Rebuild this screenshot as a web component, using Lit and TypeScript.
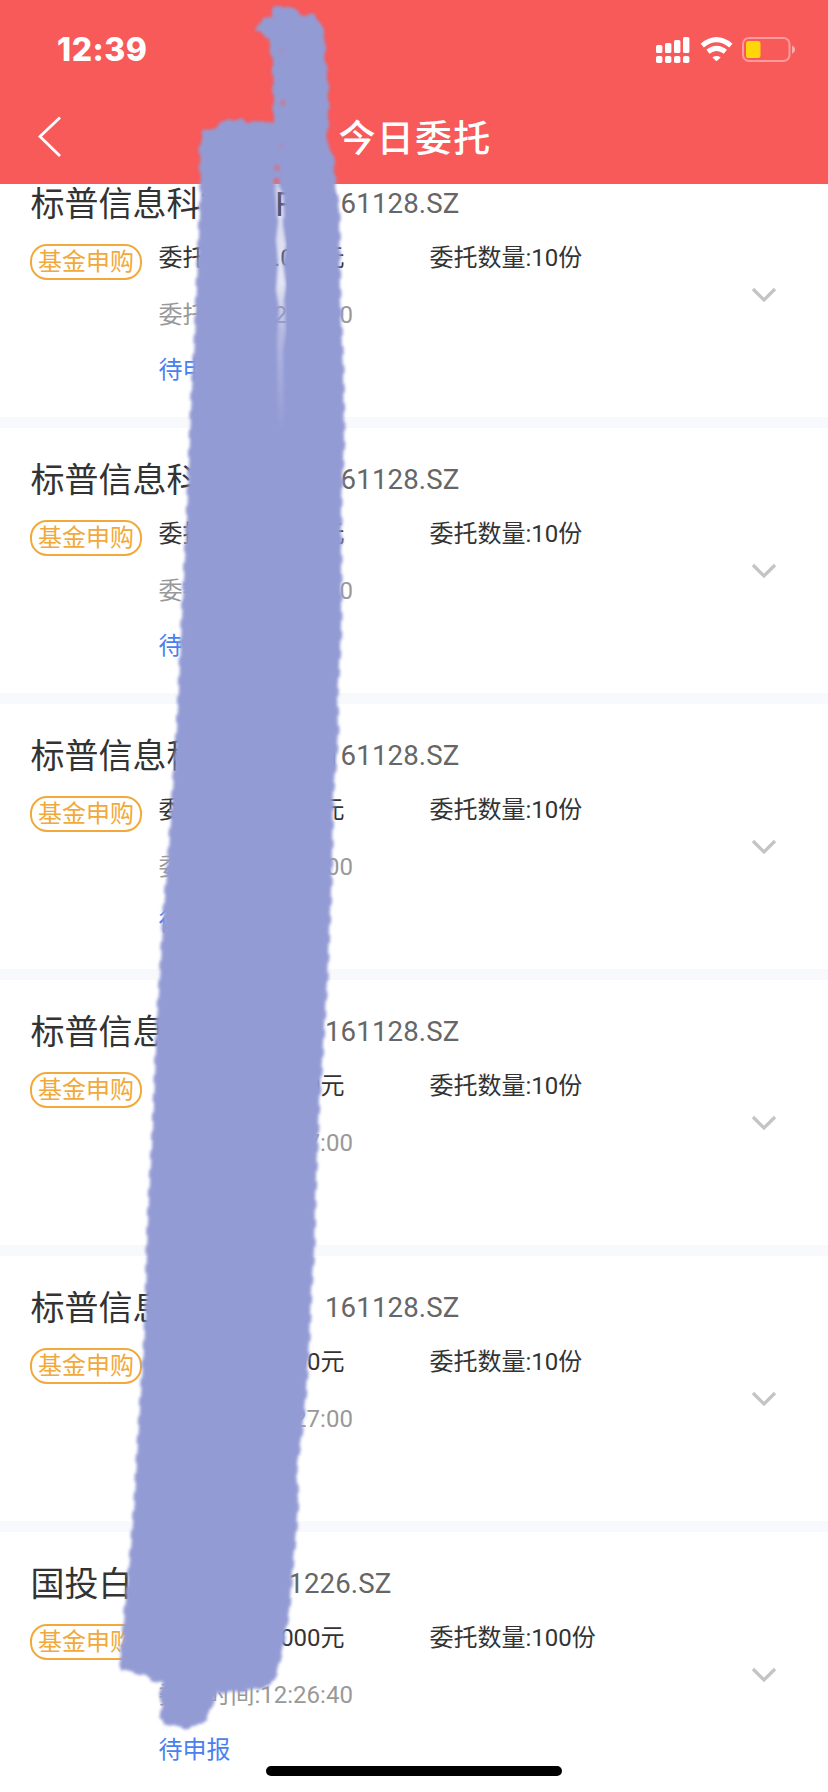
import { LitElement, html, css } from "lit";
import { customElement, property } from "lit/decorators.js";

interface Order {
  name: string;
  code: string;
  price: string;
  count: string;
  time: string;
}

const SP: Order = { name: "标普信息科技LOF", code: "161128.SZ", price: "1.000", count: "10", time: "12:27:00" };
const ORDERS: Order[] = [
  SP, SP, SP, SP, SP,
  { name: "国投白银LOF", code: "161226.SZ", price: "1.000", count: "100", time: "12:26:40" },
];

@customElement("order-row")
class OrderRow extends LitElement {
  @property({ attribute: false }) order!: Order;

  static styles = css`
    :host {
      display: block;
      box-sizing: border-box;
      height: 276px;
      padding: 32.5px 51.5px 0 30px;
      border-bottom: 11px solid #f8f9fc;
      background: #fff;
      white-space: nowrap;
    }
    .head { display: flex; align-items: center; height: 40px; line-height: 40px; }
    .name { font-size: 34px; color: #333; padding-left: 0.5px; }
    .code { font-size: 27.6px; letter-spacing: 0.15px; color: #666; margin-left: 31px; }
    .body { display: flex; align-items: flex-start; padding-top: 17px; font-size: 24px; line-height: 34px; color: #333; }
    .badge {
      box-sizing: border-box;
      width: 112px;
      height: 36px;
      margin: 3px 16.5px 0 0;
      border: 2px solid #f2a93b;
      border-radius: 17px;
      color: #f2a93b;
      line-height: 32px;
      text-align: center;
    }
    .info { display: grid; grid-template-columns: 271px 1fr; flex: 1; }
    .time { grid-column: 1 / 3; margin-top: 23px; color: #999; }
    .status { grid-column: 1 / 3; margin-top: 21px; color: #4a7ff0; }
    .arrow { display: block; margin-top: 45px; }
  `;

  render() {
    const o = this.order;
    return html`
      <div class="head"><span class="name">${o.name}</span><span class="code">${o.code}</span></div>
      <div class="body">
        <span class="badge">基金申购</span>
        <div class="info">
          <span>委托价格:${o.price}元</span>
          <span>委托数量:${o.count}份</span>
          <span class="time">委托时间:${o.time}</span>
          <span class="status">待申报</span>
        </div>
        <svg class="arrow" width="26" height="18" viewBox="0 0 26 18">
          <path d="M2 3 L13 14 L24 3" fill="none" stroke="#c4c4c4" stroke-width="3.3" />
        </svg>
      </div>
    `;
  }
}

@customElement("app-root")
class AppRoot extends LitElement {
  static styles = css`
    :host {
      display: flex;
      flex-direction: column;
      position: relative;
      height: 1792px;
      overflow: hidden;
      background: #fff;
      font-family: Roboto, "Noto Sans CJK SC", sans-serif;
    }
    .header { height: 184px; background: #f85959; color: #fff; flex: none; }
    .statusbar { display: flex; justify-content: space-between; height: 98px; box-sizing: border-box; padding: 30px 33px 0 57px; }
    .clock { font: 800 32px/40px Inter, sans-serif; letter-spacing: 0.5px; }
    .signals { display: block; margin-top: 6px; }
    .nav { display: grid; grid-template-columns: 88px 1fr 88px; align-items: center; height: 80px; }
    .back { display: block; margin-left: 36px; margin-top: -2px; }
    .title { text-align: center; font-size: 37px; letter-spacing: 1.3px; font-weight: 500; line-height: 50px; padding: 4px 0 0 2px; }
    .viewport { flex: 1; overflow: hidden; }
    .list { margin-top: -32.5px; }
    .scribble { position: absolute; left: 0; top: 0; }
    .home { position: absolute; left: 266px; bottom: 16px; width: 296px; height: 10px; border-radius: 5px; background: #000; }
  `;

  render() {
    return html`
      <div class="header">
        <div class="statusbar">
          <span class="clock">12:39</span>
          <svg class="signals" width="140" height="28" viewBox="654 36 140 28">
            <g fill="#fff">
              <rect x="655" y="45" width="6.4" height="8" rx="1.5" />
              <rect x="664" y="43" width="6.4" height="10" rx="1.5" />
              <rect x="673" y="40" width="6.4" height="13" rx="1.5" />
              <rect x="682" y="37" width="6.4" height="16" rx="1.5" />
              <rect x="655" y="56" width="6.4" height="7" rx="1.8" />
              <rect x="664" y="56" width="6.4" height="7" rx="1.8" />
              <rect x="673" y="56" width="6.4" height="7" rx="1.8" />
              <rect x="682" y="56" width="6.4" height="7" rx="1.8" />
              <path d="M711.3 57.4 Q715.5 54.6 719.7 57.4 L715.5 61.2 Z" />
            </g>
            <g fill="none" stroke="#fff" stroke-width="5">
              <path d="M701.3 45.6 Q715.5 33.8 729.9 45.6" />
              <path d="M707 51.8 Q715.5 44.8 724.4 51.8" />
            </g>
            <rect x="742" y="38" width="46.5" height="23" rx="6" fill="none" stroke="#fff" stroke-opacity=".4" stroke-width="2" />
            <path d="M791 45.5 Q794 46.5 794 49.5 Q794 52.5 791 53.5 Z" fill="#fff" fill-opacity=".5" />
            <rect x="745" y="41" width="14.5" height="17" rx="2.5" fill="#ffd60a" />
          </svg>
        </div>
        <div class="nav">
          <svg class="back" width="28" height="44" viewBox="0 0 28 44">
            <path d="M24 2.5 L4 21.5 L24 41" fill="none" stroke="#fff" stroke-width="2.8" />
          </svg>
          <span class="title">今日委托</span>
          <span></span>
        </div>
      </div>
      <div class="viewport">
        <div class="list">${ORDERS.map((o) => html`<order-row .order=${o}></order-row>`)}</div>
      </div>
      <svg class="scribble" width="420" height="1792" viewBox="0 0 420 1792">
        <defs>
          <filter id="soft" x="-5%" y="-2%" width="110%" height="104%"><feGaussianBlur stdDeviation="1.5" /></filter>
          <linearGradient id="fade" x1="0" y1="184" x2="0" y2="430" gradientUnits="userSpaceOnUse">
            <stop offset="0" stop-color="#000" stop-opacity=".4" />
            <stop offset=".15" stop-color="#000" stop-opacity=".65" />
            <stop offset=".4" stop-color="#000" stop-opacity=".75" />
            <stop offset=".6" stop-color="#000" stop-opacity=".3" />
            <stop offset="1" stop-color="#000" stop-opacity="0" />
          </linearGradient>
          <mask id="gap" maskUnits="userSpaceOnUse" x="0" y="0" width="420" height="1792">
            <rect width="420" height="1792" fill="#fff" />
            <g filter="url(#soft)">
              <path d="M276 184 L279 184 L283 200 L283 225 L286 245 L283 262 L286 285 L284 300 L286 330 L283 350 L284 430 L278 430 L277 340 L279 310 L276 290 L278 262 L276 240 L278 222 Z" fill="url(#fade)" />
              <path d="M274 186 L279 186 L284 194 L285 218 L277 218 Z" fill-opacity=".3" />
              <circle cx="277" cy="168" r="3" fill-opacity=".5" />
              <circle cx="276.5" cy="181" r="3" fill-opacity=".8" />
              <circle cx="283" cy="103" r="3" fill-opacity=".4" />
              <circle cx="282" cy="51" r="2.5" fill-opacity=".15" />
              <circle cx="281" cy="146" r="3" fill-opacity=".15" />
            </g>
          </mask>
        </defs>
        <g mask="url(#gap)">
          <path filter="url(#soft)" fill="#939bd4" stroke="#939bd4" stroke-width="3" stroke-linecap="round" stroke-linejoin="round" stroke-dasharray="6 13"
            d="M257 30 L264 17 L272 20 L272 8 L290 7 L302 16 L313 15 L321 24 L325 42 L324 55 L327 75 L328 95 L328 120 L326 143 L333 155 L335 185 L339 210 L340 300 L343 370 L344 440 L341 500 L341 550 L341 630 L339 665 L337 695 L338 730 L336 760 L333 790 L332 850 L331 890 L329 930 L327 980 L325 1010 L322 1060 L319 1100 L317 1150 L315 1200 L314 1250 L311 1290 L309 1340 L306 1390 L302 1430 L296 1470 L298 1500 L296 1530 L293 1560 L289 1610 L282 1650 L276 1674 L270 1685 L258 1688 L240 1691 L218 1692 L212 1704 L206 1719 L197 1725 L186 1728 L165 1723 L159 1717 L164 1708 L160 1700 L163 1682 L152 1680 L146 1675 L122 1669 L120 1660 L123 1640 L125 1610 L131 1550 L135 1500 L137 1460 L140 1410 L144 1350 L146 1310 L147 1250 L149 1200 L153 1130 L155 1080 L157 1020 L160 980 L164 910 L169 850 L173 790 L177 730 L179 690 L181 640 L184 580 L187 520 L190 440 L192 390 L195 340 L198 260 L201 190 L200 150 L203 132 L216 128 L228 119 L238 122 L242 118 L248 124 L262 121 L274 125 L274 100 L273 60 L269 39 L264 33 Z" />
        </g>
      </svg>
      <div class="home"></div>
    `;
  }
}
